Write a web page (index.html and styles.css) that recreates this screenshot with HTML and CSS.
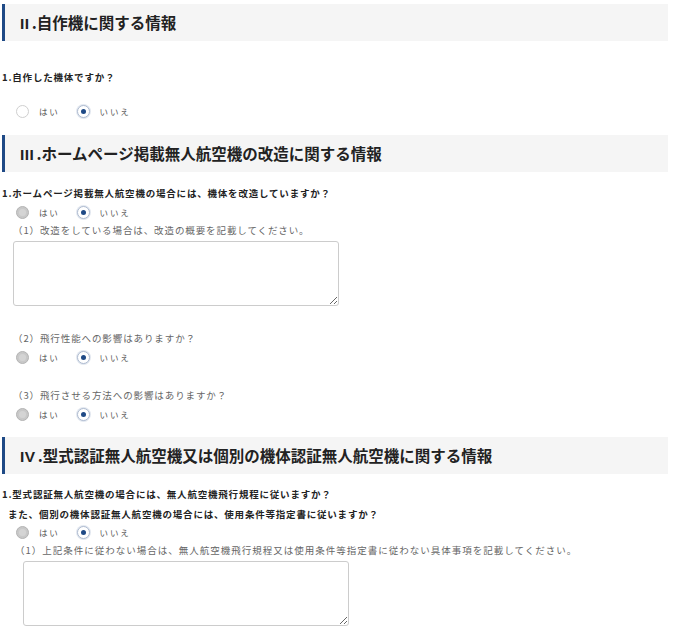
FILE: index.html
```html
<!DOCTYPE html>
<html lang="ja">
<head>
    <meta charset="UTF-8">
    <meta name="viewport" content="width=device-width, initial-scale=1.0">
    <title>機体情報</title>
    <link rel="stylesheet" href="styles.css">
</head>
<body>
    <div class="form-page">
        <!-- II -->
        <h2 class="sec-title"><span class="num">II</span>.自作機に関する情報</h2>
        <div class="q q-first">
            <p class="q-label">1.自作した機体ですか？</p>
            <div class="radios">
                <label class="radio"><span class="dot"></span><span class="txt">はい</span></label>
                <label class="radio is-on"><span class="dot"></span><span class="txt">いいえ</span></label>
            </div>
        </div>

        <!-- III -->
        <h2 class="sec-title"><span class="num">III</span>.ホームページ掲載無人航空機の改造に関する情報</h2>
        <div class="q">
            <p class="q-label">1.ホームページ掲載無人航空機の場合には、機体を改造していますか？</p>
            <div class="radios">
                <label class="radio is-off"><span class="dot"></span><span class="txt">はい</span></label>
                <label class="radio is-on"><span class="dot"></span><span class="txt">いいえ</span></label>
            </div>
            <p class="sub-label">（1）改造をしている場合は、改造の概要を記載してください。</p>
            <textarea class="memo"></textarea>

            <p class="sub-label sub-gap">（2）飛行性能への影響はありますか？</p>
            <div class="radios">
                <label class="radio is-off"><span class="dot"></span><span class="txt">はい</span></label>
                <label class="radio is-on"><span class="dot"></span><span class="txt">いいえ</span></label>
            </div>

            <p class="sub-label sub-gap2">（3）飛行させる方法への影響はありますか？</p>
            <div class="radios">
                <label class="radio is-off"><span class="dot"></span><span class="txt">はい</span></label>
                <label class="radio is-on"><span class="dot"></span><span class="txt">いいえ</span></label>
            </div>
        </div>

        <!-- IV -->
        <h2 class="sec-title"><span class="num">IV</span>.型式認証無人航空機又は個別の機体認証無人航空機に関する情報</h2>
        <div class="q">
            <p class="q-label q-two">
                <span class="line">1.型式認証無人航空機の場合には、無人航空機飛行規程に従いますか？</span>
                <span class="line line-indent">また、個別の機体認証無人航空機の場合には、使用条件等指定書に従いますか？</span>
            </p>
            <div class="radios">
                <label class="radio is-off"><span class="dot"></span><span class="txt">はい</span></label>
                <label class="radio is-on"><span class="dot"></span><span class="txt">いいえ</span></label>
            </div>
            <p class="sub-label sub-wide">（1）上記条件に従わない場合は、無人航空機飛行規程又は使用条件等指定書に従わない具体事項を記載してください。</p>
            <textarea class="memo memo-wide"></textarea>
        </div>
    </div>
</body>
</html>
```

FILE: styles.css
```css
:root {
    --navy: #1f4a86;
    --bar-bg: #f5f5f5;
    --text: #222;
    --muted: #666;
}

* {
    box-sizing: border-box;
    margin: 0;
    padding: 0;
}

body {
    font-family: "Noto Sans CJK JP", "Noto Sans", sans-serif;
    color: var(--text);
    background: #fff;
}

.form-page {
    padding: 4px 5px 0 2px;
}

.sec-title {
    height: 37px;
    line-height: 37px;
    padding-left: 15px;
    background: var(--bar-bg);
    border-left: 3px solid var(--navy);
    font-size: 15.5px;
    font-weight: bold;
    color: var(--text);
    white-space: nowrap;
}

.sec-title .num {
    font-family: "Liberation Sans", sans-serif;
    letter-spacing: 0.5px;
    margin-right: 2px;
}

.q {
    padding-bottom: 14px;
}

.q-label {
    margin-top: 12px;
    font-size: 9.5px;
    line-height: 18px;
    font-weight: bold;
    letter-spacing: 0.8px;
    white-space: nowrap;
}

.q-first {
    padding-bottom: 14px;
}

.q-first .q-label {
    margin-top: 26px;
    line-height: 20px;
}

.q-first .radios {
    margin-top: 14px;
    height: 20px;
}

.q-two {
    margin-top: 10px;
}

.q-two .line {
    display: block;
    line-height: 20px;
}

.q-two .line-indent {
    padding-left: 6px;
}

.radios {
    display: flex;
    align-items: center;
    gap: 17px;
    height: 18px;
    padding-left: 14px;
    margin-top: 1px;
}

.q-two + .radios {
    margin-top: -1px;
}

.radio {
    display: flex;
    align-items: center;
    gap: 10px;
    cursor: pointer;
}

.radio .dot {
    position: relative;
    width: 13px;
    height: 13px;
    border-radius: 50%;
    border: 1px solid #cfcfcf;
    background: #fff;
}

.radio.is-on .dot {
    border-color: #aebbd0;
    box-shadow: 0 0 0 1px #e3e8f0;
}

.radio.is-on .dot::after {
    content: "";
    position: absolute;
    top: 3px;
    left: 3px;
    width: 5px;
    height: 5px;
    border-radius: 50%;
    background: var(--navy);
}

.radio.is-off .dot {
    background: #c8c8c8;
    border-color: #b4b4b4;
}

.radio.is-off .dot::after {
    content: "";
    position: absolute;
    top: 2px;
    left: 2px;
    width: 7px;
    height: 7px;
    border-radius: 50%;
    background: #d4d4d4;
}

.radio .txt {
    font-size: 8.5px;
    letter-spacing: 1.8px;
    color: #555;
}

.sub-label {
    font-size: 9.5px;
    line-height: 18px;
    letter-spacing: 0.9px;
    color: var(--muted);
    padding-left: 11px;
    white-space: nowrap;
}

.sub-gap {
    margin-top: 23px;
}

.sub-gap2 {
    margin-top: 20px;
}

.sub-wide {
    padding-left: 13px;
    letter-spacing: 1px;
}

.memo {
    display: block;
    width: 326px;
    height: 65px;
    margin: 2px 0 0 11px;
    border: 1px solid #cccccc;
    border-radius: 3px;
    resize: both;
    font-family: inherit;
}

.memo-wide {
    margin-left: 21px;
}
```
